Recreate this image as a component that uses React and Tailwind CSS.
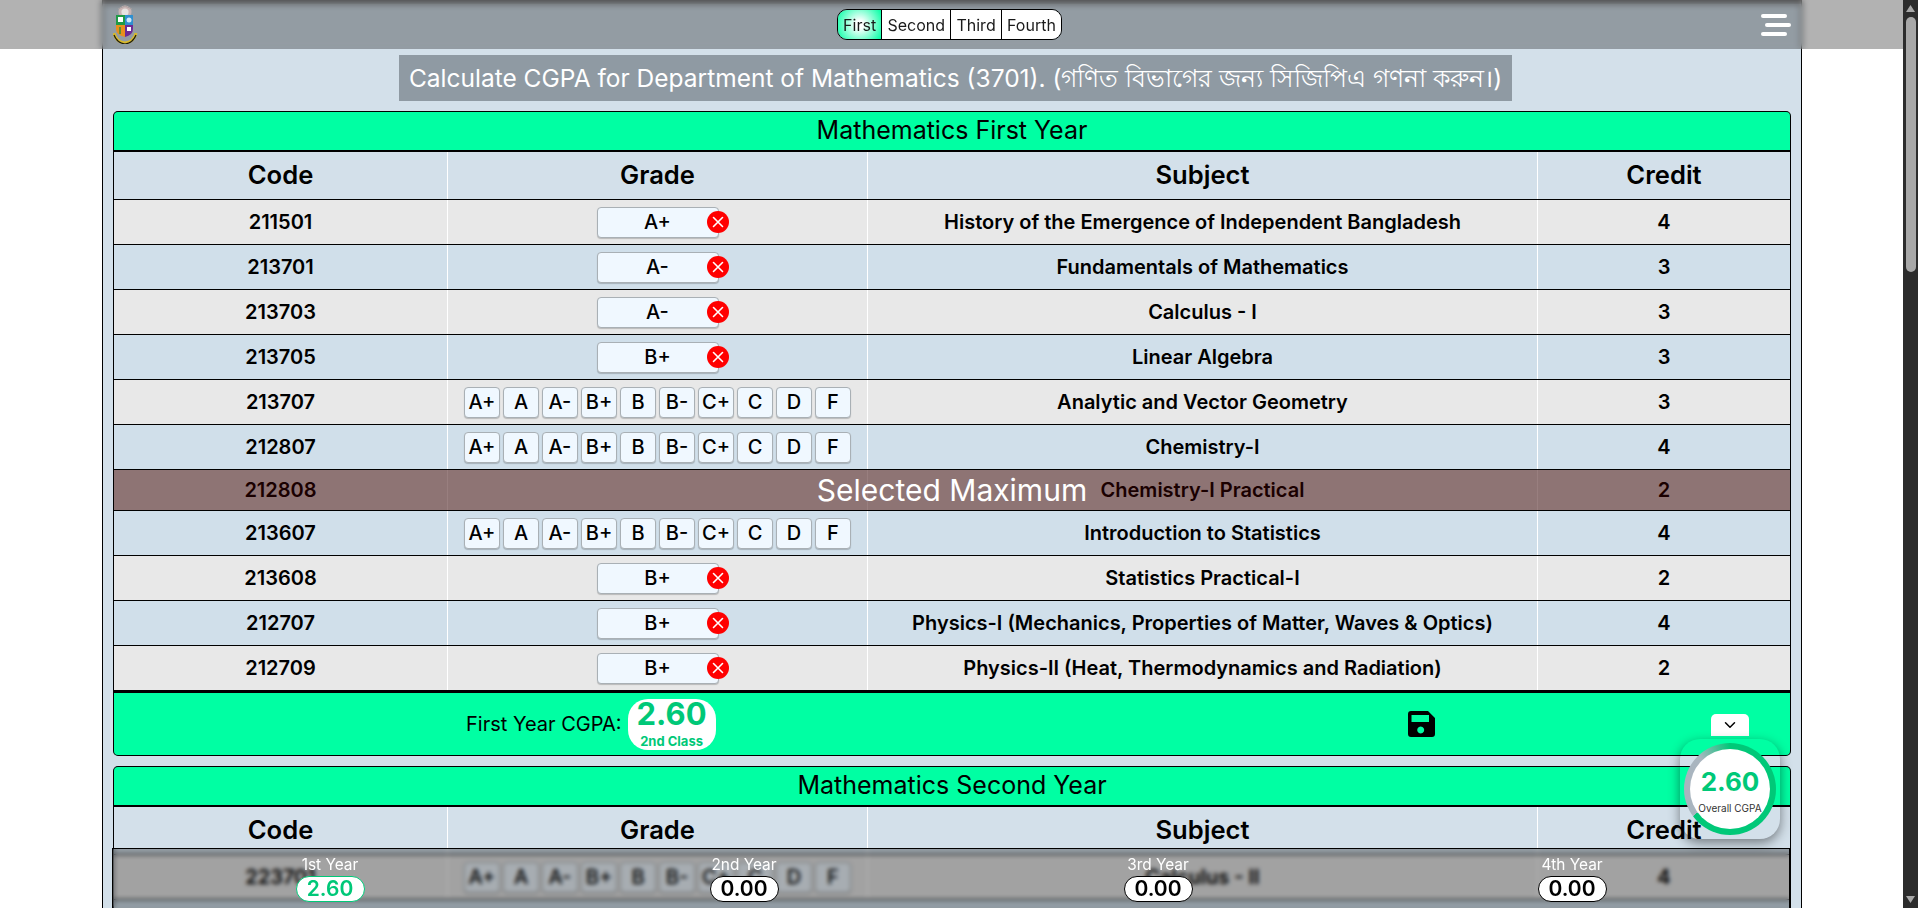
import React from "react";
import { ChevronDown } from "lucide-react";

const GRADES = ["A+", "A", "A-", "B+", "B", "B-", "C+", "C", "D", "F"];

const FIRST = [
  { code: "211501", subject: "History of the Emergence of Independent Bangladesh", credit: 4, grade: "A+" },
  { code: "213701", subject: "Fundamentals of Mathematics", credit: 3, grade: "A-" },
  { code: "213703", subject: "Calculus - I", credit: 3, grade: "A-" },
  { code: "213705", subject: "Linear Algebra", credit: 3, grade: "B+" },
  { code: "213707", subject: "Analytic and Vector Geometry", credit: 3 },
  { code: "212807", subject: "Chemistry-I", credit: 4 },
  { code: "212808", subject: "Chemistry-I Practical", credit: 2, blocked: true },
  { code: "213607", subject: "Introduction to Statistics", credit: 4 },
  { code: "213608", subject: "Statistics Practical-I", credit: 2, grade: "B+" },
  { code: "212707", subject: "Physics-I (Mechanics, Properties of Matter, Waves & Optics)", credit: 4, grade: "B+" },
  { code: "212709", subject: "Physics-II (Heat, Thermodynamics and Radiation)", credit: 2, grade: "B+" },
];

const SECOND = [{ code: "223701", subject: "Calculus - II", credit: 4 }];

const COLS = "grid grid-cols-[334px_420px_670px_1fr]";
const CELL = "flex items-center justify-center border-r border-white";

function Chip({ label }) {
  return (
    <button className="flex h-[31px] w-[36px] items-center justify-center rounded-[4px] border border-[#a9b0b5] bg-[#f0f8ff] text-[20px] font-medium text-black shadow-[0_1px_1px_rgba(0,0,0,0.2)]">
      {label}
    </button>
  );
}

function Selected({ label }) {
  return (
    <div className="relative flex h-[31px] w-[122px] items-center justify-center rounded-[4px] border border-[#a9b0b5] bg-[#f0f8ff] text-[20px] font-medium text-black shadow-[0_1px_1px_rgba(0,0,0,0.2)]">
      {label}
      <span className="absolute right-[-11px] top-[3px] flex h-[22px] w-[22px] items-center justify-center rounded-full bg-[#ff0000]">
        <svg width="12" height="12" viewBox="0 0 12 12" fill="none" stroke="white" strokeWidth="1.6" strokeLinecap="round">
          <path d="M1.5 1.5 10.5 10.5M10.5 1.5 1.5 10.5" />
        </svg>
      </span>
    </div>
  );
}

function Row({ row, index }) {
  const bg = index % 2 === 0 ? "bg-[#e8e8e8]" : "bg-[#d0dfea]";
  return (
    <div className={`${COLS} relative ${row.blocked ? "h-[41px]" : "h-[45px]"} border-b border-black ${bg} text-[20px] font-semibold text-black`}>
      <div className={CELL}>{row.code}</div>
      <div className={`${CELL} gap-[3px]`}>
        {row.blocked ? null : row.grade ? <Selected label={row.grade} /> : GRADES.map((g) => <Chip key={g} label={g} />)}
      </div>
      <div className={CELL}>{row.subject}</div>
      <div className="flex items-center justify-center">{row.credit}</div>
      {row.blocked && (
        <div className="absolute inset-0 flex items-center justify-center bg-[#330000]/50 text-[30px] font-normal text-white">
          Selected Maximum
        </div>
      )}
    </div>
  );
}

function Head({ title }) {
  return (
    <>
      <div className="flex h-[41px] items-center justify-center rounded-t-[5px] border-x border-t border-b-2 border-black bg-[#00ffa3] text-[25px] text-black">
        {title}
      </div>
      <div className={`${COLS} h-[48px] border-x border-b border-black bg-[#d3e0ea] text-[25.6px] font-semibold text-black`}>
        <div className={CELL}>Code</div>
        <div className={CELL}>Grade</div>
        <div className={CELL}>Subject</div>
        <div className="flex items-center justify-center">
          <span className="relative z-20">Credit</span>
        </div>
      </div>
    </>
  );
}

function Logo() {
  return (
    <svg width="25" height="39" viewBox="0 0 25 39" className="shrink-0">
      <circle cx="12" cy="7" r="6.5" fill="#c9b4b4" />
      <circle cx="12" cy="7" r="3.6" fill="#e6e3e0" />
      <path d="M5 4 12 1 19 4" fill="none" stroke="#a8a0a0" strokeWidth="1" />
      <rect x="3" y="10" width="9" height="10" fill="#1f9a46" />
      <rect x="12" y="10" width="8" height="10" fill="#2f8fd0" />
      <path d="M3 20h9v12q-9-2-9-8z" fill="#e88f1c" />
      <path d="M12 20h8v4q0 6-8 8z" fill="#6b2a96" />
      <rect x="5" y="12" width="5" height="5" fill="#fff" />
      <circle cx="16" cy="15" r="2.5" fill="#cfe8f8" />
      <path d="M7 22v7" stroke="#2f8f3a" strokeWidth="1.5" />
      <rect x="14" y="22" width="4" height="4" fill="#fff" />
      <path d="M1 28q2 9 11 10q9-1 11-10" fill="none" stroke="#d9b928" strokeWidth="3" />
      <path d="M1 30q3 8 11 9q8-1 11-9" fill="none" stroke="#1c1c10" strokeWidth="1.2" />
    </svg>
  );
}

function Save() {
  return (
    <svg width="27" height="26" viewBox="0 0 27 26" className="ml-[692px]">
      <path
        fillRule="evenodd"
        fill="black"
        d="M3 0H20L27 7V23a3 3 0 0 1-3 3H3a3 3 0 0 1-3-3V3a3 3 0 0 1 3-3ZM3.500 4V11H21V4ZM12.700 15.500a3.500 3.500 0 1 0 .01 0Z"
      />
    </svg>
  );
}

function Tab({ label, active, last }) {
  return (
    <button
      className={`flex h-full items-center justify-center px-[5.2px] text-[16px] text-[#1a1a1a] ${last ? "" : "border-r border-black"} ${active ? "bg-[radial-gradient(circle,#ffffff_15%,#00ffa3_100%)]" : "bg-white"}`}
    >
      {label}
    </button>
  );
}

function Year({ label, value, green }) {
  return (
    <div className="flex flex-col items-center">
      <div className="h-[20px] text-[15.4px] leading-[20px] text-white">{label}</div>
      <div
        className={`mt-[1px] flex h-[26px] w-[69px] items-center justify-center rounded-full border bg-white text-[21px] font-semibold ${green ? "border-[#00c878] text-[#00c878]" : "border-black text-black"}`}
      >
        {value}
      </div>
    </div>
  );
}

export default function App() {
  return (
    <div className="flex h-screen w-full overflow-hidden bg-white font-['Inter','Noto_Sans','DejaVu_Sans',sans-serif]">
      <main className="relative h-full w-[1903px] shrink-0 overflow-hidden">
        <div className="ml-[102px] h-full w-[1700px] border-x border-t-4 border-x-black border-t-[#777] bg-[#d3e0ea] pl-[10px] pr-[10px] pt-[51px]">
          <div className="flex justify-center">
            <h1 className="ml-[7px] flex h-[46px] items-center bg-[#8f9aa3] px-[10px] text-[24.5px] font-normal text-white">
              Calculate CGPA for Department of Mathematics (3701). (গণিত বিভাগের জন্য সিজিপিএ গণনা করুন।)
            </h1>
          </div>

          <section className="mt-[10px]">
            <Head title="Mathematics First Year" />
            <div className="border-x border-black">
              {FIRST.map((r, i) => (
                <Row key={r.code} row={r} index={i} />
              ))}
            </div>
            <div className="flex h-[65px] items-center rounded-b-[5px] border-x border-b border-t-2 border-black bg-[#00ffa3] pl-[352px] text-black">
              <span className="text-[20px]">First Year CGPA:</span>
              <div className="ml-[6px] flex h-[51px] w-[88px] flex-col items-center rounded-[20px] bg-white text-[#00c878]">
                <span className="text-[31px] font-bold leading-[30px]">2.60</span>
                <span className="mt-[5px] text-[13px] font-bold leading-[15px]">2nd Class</span>
              </div>
              <Save />
            </div>
          </section>

          <section className="mt-[10px]">
            <Head title="Mathematics Second Year" />
            <div className="border-x border-black">
              {SECOND.map((r, i) => (
                <Row key={r.code} row={r} index={i} />
              ))}
              <div className="h-[45px] bg-[#d0dfea]" />
            </div>
          </section>
        </div>

        {/* top bar */}
        <header className="absolute left-0 right-0 top-0 z-30 h-[49px] bg-black/30 backdrop-blur-[3px]">
          <div className="ml-[102px] flex h-full w-[1700px] items-center justify-between pl-[11px] pr-[11px]">
            <Logo />
            <nav className="flex h-[31px] overflow-hidden rounded-[10px] border border-black">
              <Tab label="First" active />
              <Tab label="Second" />
              <Tab label="Third" />
              <Tab label="Fourth" last />
            </nav>
            <div className="flex w-[30px] flex-col gap-[5px]">
              <span className="h-[4px] w-[26px] rounded-full bg-white" />
              <span className="ml-[4px] h-[4px] w-[26px] rounded-full bg-white" />
              <span className="h-[4px] w-[26px] rounded-full bg-white" />
            </div>
          </div>
        </header>

        {/* floating overall gauge */}
        <button className="absolute left-[1711px] top-[714px] z-10 flex h-[22px] w-[38px] items-center justify-center rounded-t-[5px] bg-white text-black">
          <ChevronDown size={18} strokeWidth={2} />
        </button>
        <div className="absolute left-[1680px] top-[739px] z-10 flex h-[100px] w-[100px] items-center justify-center rounded-[20px] shadow-[0_4px_12px_rgba(0,0,0,0.45)]">
          <div className="flex h-[92px] w-[92px] items-center justify-center rounded-full bg-[conic-gradient(#00c878_0_65%,#a9b5bf_65%_88%,#00c878_100%)]">
            <div className="flex h-[80px] w-[80px] flex-col items-center justify-center rounded-full bg-white">
              <span className="mt-[2px] text-[26px] font-bold leading-[32px] text-[#00c878]">2.60</span>
              <span className="mt-[3px] text-[10px] leading-[14px] text-[#333]">Overall CGPA</span>
            </div>
          </div>
        </div>

        {/* bottom yearly summary */}
        <div className="absolute left-[112px] top-[848px] z-20 grid h-[60px] w-[1678px] grid-cols-4 border-x border-t border-black bg-black/30 px-[10px] pt-[6px] backdrop-blur-[2px]">
          <Year label="1st Year" value="2.60" green />
          <Year label="2nd Year" value="0.00" />
          <Year label="3rd Year" value="0.00" />
          <Year label="4th Year" value="0.00" />
        </div>
      </main>

      {/* page scrollbar */}
      <div className="flex h-full w-[15px] shrink-0 flex-col items-center justify-between bg-[#2c2c2c] py-[5px]">
        <div className="flex w-full flex-col items-center">
          <svg width="9" height="7" viewBox="0 0 9 7"><path d="M4.500 0 9 7H0Z" fill="#a8a8a8" /></svg>
          <div className="mt-[5px] h-[255px] w-[10px] rounded-full bg-[#a8a8a8]" />
        </div>
        <svg width="9" height="7" viewBox="0 0 9 7"><path d="M0 0H9L4.500 7Z" fill="#a8a8a8" /></svg>
      </div>
    </div>
  );
}
